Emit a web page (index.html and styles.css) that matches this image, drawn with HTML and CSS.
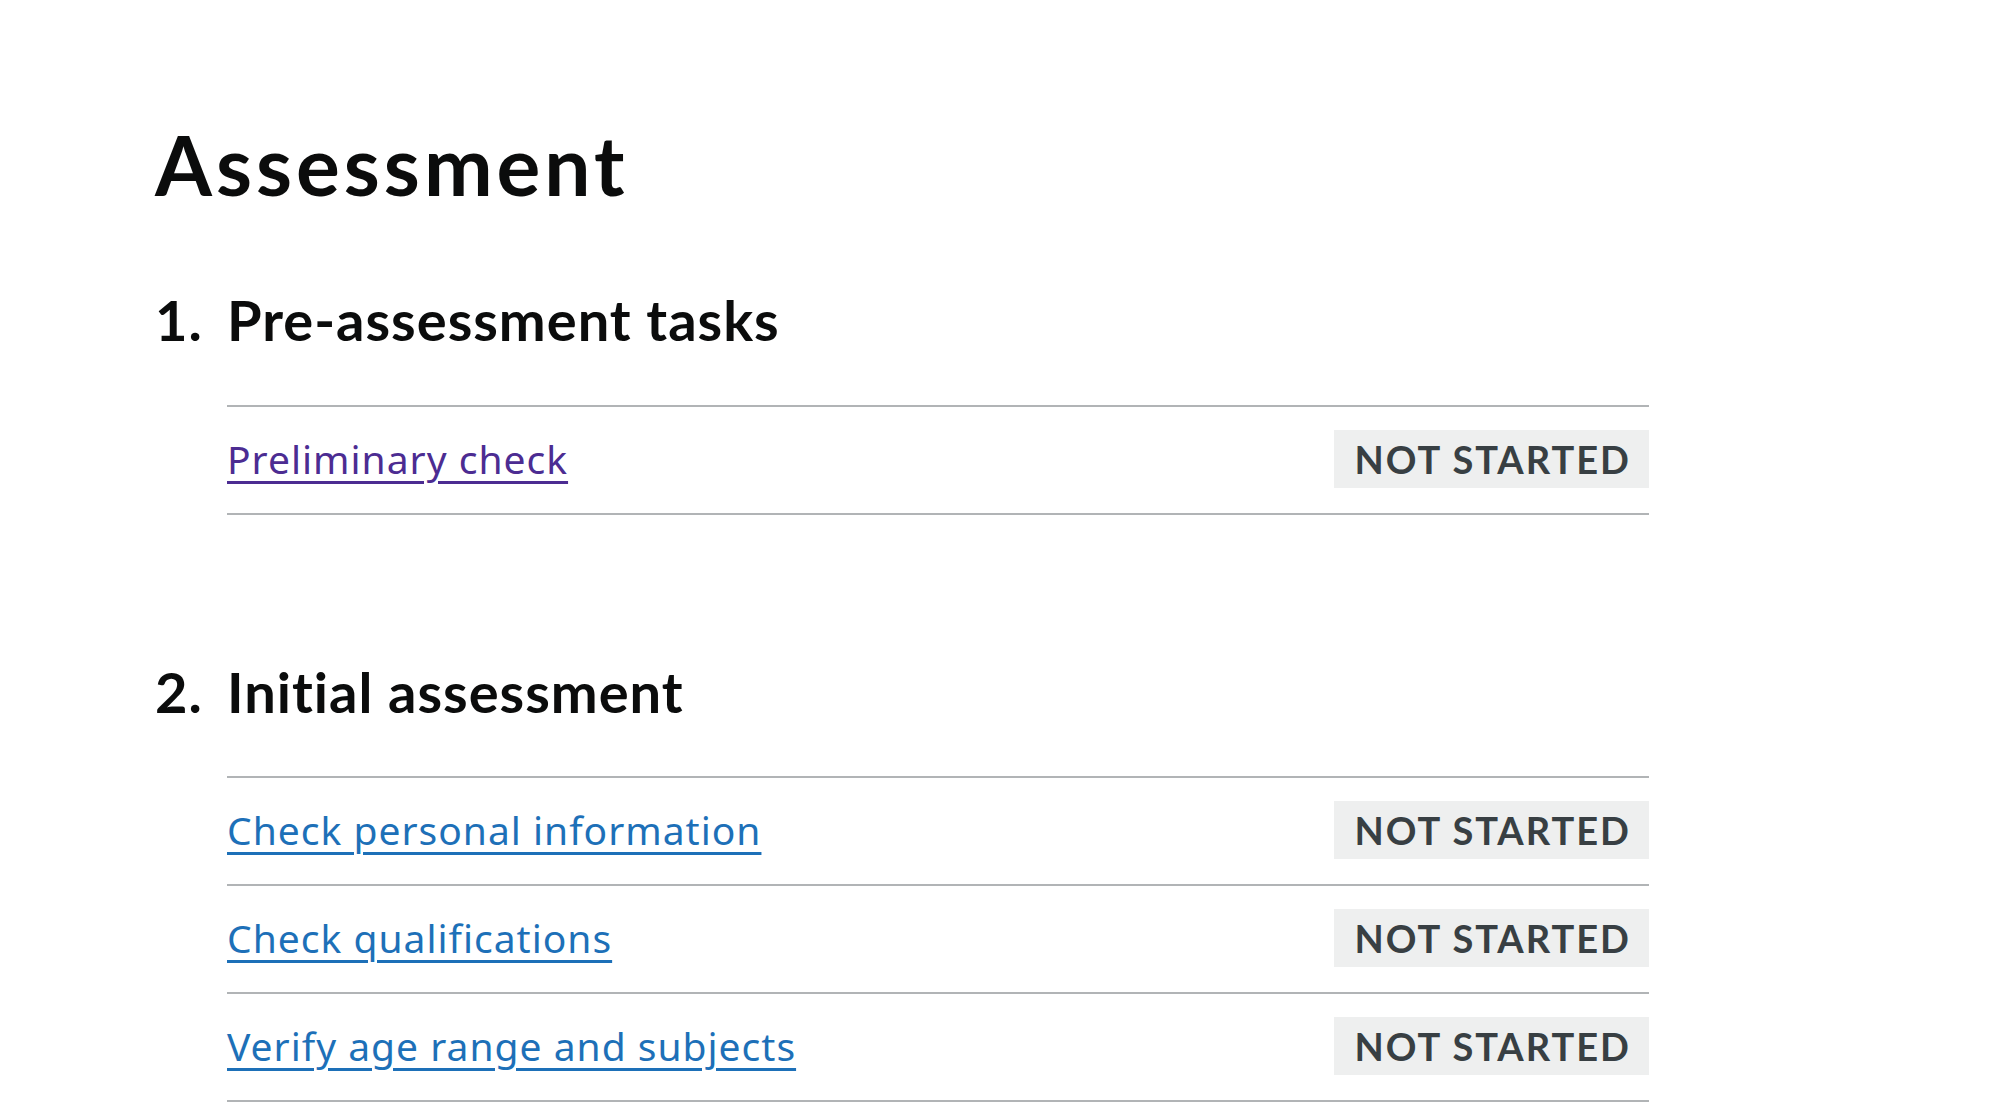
FILE: index.html
```html
<!DOCTYPE html>
<html lang="en">
<head>
<meta charset="utf-8">
<title>Assessment</title>
<link rel="stylesheet" href="styles.css">
</head>
<body>
<main class="page">
  <h1 class="title">Assessment</h1>
  <ol class="sections">
    <li class="section">
      <h2 class="section-heading"><span class="section-number">1.</span><span>Pre-assessment tasks</span></h2>
      <ul class="tasks">
        <li class="task">
          <a class="task-link visited" href="#preliminary">Preliminary check</a>
          <strong class="tag">Not started</strong>
        </li>
      </ul>
    </li>
    <li class="section">
      <h2 class="section-heading"><span class="section-number">2.</span><span>Initial assessment</span></h2>
      <ul class="tasks">
        <li class="task">
          <a class="task-link" href="#personal">Check personal information</a>
          <strong class="tag">Not started</strong>
        </li>
        <li class="task">
          <a class="task-link" href="#qualifications">Check qualifications</a>
          <strong class="tag">Not started</strong>
        </li>
        <li class="task">
          <a class="task-link" href="#age-range">Verify age range and subjects</a>
          <strong class="tag">Not started</strong>
        </li>
      </ul>
    </li>
  </ol>
</main>
</body>
</html>
```
FILE: styles.css
```css
html, body {
  margin: 0;
  padding: 0;
  background: #ffffff;
}

body {
  font-family: Lato, "Noto Sans", "Liberation Sans", sans-serif;
  color: #0b0c0c;
}

.page {
  padding: 115px 0 0 155px;
  width: 1494px;
}

.title {
  margin: 0;
  font-size: 82px;
  line-height: 1.2;
  font-weight: 700;
  letter-spacing: 4px;
}

.sections {
  list-style: none;
  margin: 73px 0 0;
  padding: 0;
}

.section + .section {
  margin-top: 143px;
}

.section-heading {
  display: flex;
  margin: 0 0 51px;
  font-size: 56px;
  line-height: 1.2;
  font-weight: 700;
  letter-spacing: 1px;
}

.section-number {
  flex: 0 0 72px;
}

.tasks {
  list-style: none;
  margin: 0 0 0 72px;
  padding: 0;
  border-top: 2px solid #b1b4b6;
}

.task {
  display: flex;
  justify-content: space-between;
  align-items: baseline;
  padding: 23px 0 25px;
  border-bottom: 2px solid #b1b4b6;
}

.task-link {
  font-family: "Noto Sans", Lato, sans-serif;
  font-size: 39px;
  line-height: 1.2;
  letter-spacing: 1px;
  color: #1d70b8;
  text-decoration: underline;
  text-decoration-thickness: 3px;
  text-underline-offset: 7px;
}

.task-link.visited {
  color: #4c2c92;
}

.tag {
  display: inline-block;
  padding: 6px 18px 6px 20px;
  font-size: 38px;
  line-height: 46px;
  font-weight: 700;
  letter-spacing: 2px;
  text-transform: uppercase;
  color: #383f43;
  background: #eeefef;
}
```
